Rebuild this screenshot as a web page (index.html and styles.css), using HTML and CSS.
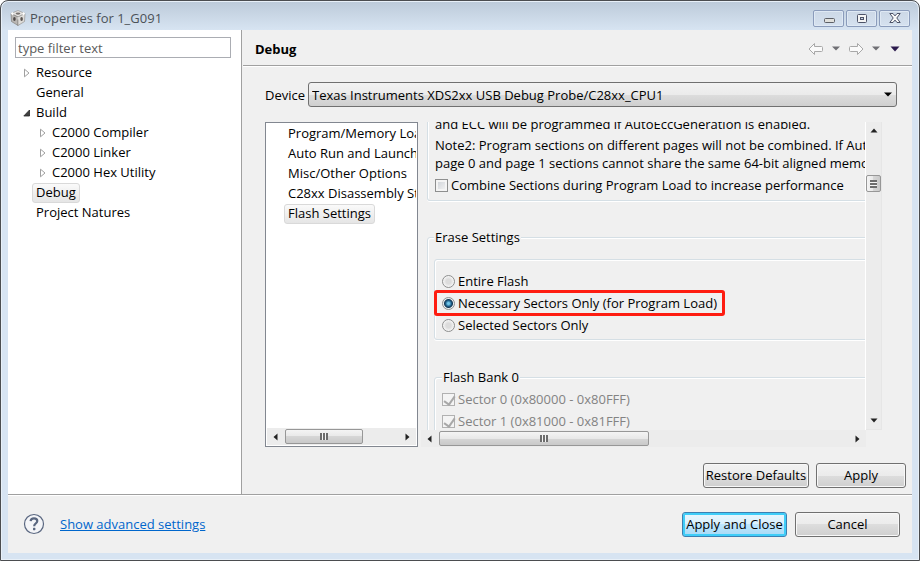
FILE: index.html
```html
<!DOCTYPE html>
<html lang="en">
<head>
    <meta charset="UTF-8">
    <meta name="viewport" content="width=device-width, initial-scale=1.0">
    <title>Properties for 1_G091</title>
    <link rel="stylesheet" href="styles.css">
</head>
<body>
    <div class="window">
        <header class="titlebar">
            <svg class="app-icon" width="16" height="16" viewBox="0 0 16 16">
                <path d="M8 0.5 15 3.5 8 7 1 3.5Z" fill="#e6e4e2" stroke="#8b8a88" stroke-width=".6"/>
                <path d="M1 3.5 8 7V15.5L1.5 11.5Z" fill="#b9b6b3" stroke="#77736f" stroke-width=".6"/>
                <path d="M15 3.5 8 7V15.5L14.5 11.5Z" fill="#dedcd9" stroke="#8b8a88" stroke-width=".6"/>
                <ellipse cx="8" cy="3.6" rx="2.4" ry="1.1" fill="#77716d"/>
                <ellipse cx="4.4" cy="9" rx="1.3" ry="2.1" fill="#4f4a48"/>
                <ellipse cx="11.6" cy="9" rx="1.3" ry="2.1" fill="#5b5552"/>
                <path d="M1 3.5 3 2.6V5ZM8 7V9.5M15 3.5 13 2.6V5Z" fill="#fff" stroke="#fff" stroke-width=".8"/>
            </svg>
            <h1 class="title">Properties for 1_G091</h1>
            <div class="window-buttons">
                <button class="window-button" type="button" aria-label="Minimize">
                    <svg width="12" height="12" viewBox="0 0 12 12"><rect x="1.5" y="6.5" width="10" height="4" rx="1" fill="#e0e0dc" stroke="#5c5f66"/></svg>
                </button>
                <button class="window-button" type="button" aria-label="Maximize">
                    <svg width="12" height="12" viewBox="0 0 12 12"><rect x="1.5" y="2.5" width="9" height="8" rx="1" fill="#f4f4f4" stroke="#4d5368"/><rect x="4.5" y="5.5" width="3" height="2" fill="#c7d3e2" stroke="#4d5368"/></svg>
                </button>
                <button class="window-button" type="button" aria-label="Close">
                    <svg width="12" height="12" viewBox="0 0 12 12"><path d="M.8 1.5H4L6 3.9 8 1.5h3.2L7.8 6l3.4 4.5H8L6 8.1 4 10.5H.8L4.2 6Z" fill="#f8f8f8" stroke="#4d5368"/></svg>
                </button>
            </div>
        </header>

        <div class="client">
            <div class="main">
                <aside class="sidebar">
                    <input class="filter" type="text" placeholder="type filter text" aria-label="type filter text">
                    <ul class="tree">
                        <li class="tree-item"><svg class="twisty" width="8" height="10"><path d="M1.5 1.2v7.6L6 5Z" fill="#fff" stroke="#a0a0a0"/></svg><span class="tree-label">Resource</span></li>
                        <li class="tree-item"><span class="twisty"></span><span class="tree-label">General</span></li>
                        <li class="tree-item"><svg class="twisty" width="8" height="10"><path d="M6.5 2v6H.8Z" fill="#404040" stroke="#262626" stroke-width=".8"/></svg><span class="tree-label">Build</span></li>
                        <li class="tree-item child"><svg class="twisty" width="8" height="10"><path d="M1.5 1.2v7.6L6 5Z" fill="#fff" stroke="#a0a0a0"/></svg><span class="tree-label">C2000 Compiler</span></li>
                        <li class="tree-item child"><svg class="twisty" width="8" height="10"><path d="M1.5 1.2v7.6L6 5Z" fill="#fff" stroke="#a0a0a0"/></svg><span class="tree-label">C2000 Linker</span></li>
                        <li class="tree-item child"><svg class="twisty" width="8" height="10"><path d="M1.5 1.2v7.6L6 5Z" fill="#fff" stroke="#a0a0a0"/></svg><span class="tree-label">C2000 Hex Utility</span></li>
                        <li class="tree-item"><span class="twisty"></span><span class="tree-label selected">Debug</span></li>
                        <li class="tree-item"><span class="twisty"></span><span class="tree-label">Project Natures</span></li>
                    </ul>
                </aside>

                <section class="page">
                    <div class="page-header">
                        <h2 class="page-title">Debug</h2>
                        <div class="history">
                            <button class="tool" type="button" aria-label="Back"><svg width="16" height="14" viewBox="0 0 16 14"><path d="M1 7 6.5 1.5V4.5H13.5q1 0 1 1V8.5q0 1-1 1H6.5V12.5Z" fill="#fafafa" stroke="#a8a8a8"/></svg></button>
                            <button class="tool" type="button" aria-label="Back history"><svg width="8" height="5"><path d="M0 .5h8L4 4.5Z" fill="#6f6f74"/></svg></button>
                            <button class="tool" type="button" aria-label="Forward"><svg width="16" height="14" viewBox="0 0 16 14"><path d="M15 7 9.5 1.5V4.5H2.5q-1 0-1 1V8.5q0 1 1 1H9.5V12.5Z" fill="#fafafa" stroke="#a8a8a8"/></svg></button>
                            <button class="tool" type="button" aria-label="Forward history"><svg width="8" height="5"><path d="M0 .5h8L4 4.5Z" fill="#6f6f74"/></svg></button>
                            <button class="tool tool-menu" type="button" aria-label="Menu"><svg width="10" height="6"><path d="M.5.5h9L5 5.5Z" fill="#2b1a4d"/></svg></button>
                        </div>
                    </div>

                    <div class="device-row">
                        <label class="device-label" for="device">Device</label>
                        <div class="combo">
                            <select id="device" class="combo-select">
                                <option>Texas Instruments XDS2xx USB Debug Probe/C28xx_CPU1</option>
                            </select>
                            <svg class="combo-arrow" width="8" height="5"><path d="M0 .5h8L4 4.5Z" fill="#000"/></svg>
                        </div>
                    </div>

                    <div class="panes">
                        <div class="category-pane">
                            <ul class="categories">
                                <li class="category"><span class="tree-label">Program/Memory Load Options</span></li>
                                <li class="category"><span class="tree-label">Auto Run and Launch Options</span></li>
                                <li class="category"><span class="tree-label">Misc/Other Options</span></li>
                                <li class="category"><span class="tree-label">C28xx Disassembly Style Options</span></li>
                                <li class="category"><span class="tree-label selected">Flash Settings</span></li>
                            </ul>
                            <div class="hscroll">
                                <svg class="scroll-arrow" width="5" height="8"><path d="M4.5.5v7L.5 4Z" fill="#222"/></svg>
                                <div class="track"><div class="thumb thumb-categories"></div></div>
                                <svg class="scroll-arrow" width="5" height="8"><path d="M.5.5v7L4.5 4Z" fill="#222"/></svg>
                            </div>
                        </div>

                        <div class="settings-pane">
                            <div class="settings">
                                <div class="group group-program">
                                    <p class="note">and ECC will be programmed if AutoEccGeneration is enabled.</p>
                                    <p class="note">Note2: Program sections on different pages will not be combined. If AutoEccGeneration is enabled,<br>page 0 and page 1 sections cannot share the same 64-bit aligned memory address.</p>
                                    <label class="option option-combine"><input class="check" type="checkbox">Combine Sections during Program Load to increase performance</label>
                                </div>

                                <fieldset class="group group-erase">
                                    <legend>Erase Settings</legend>
                                    <div class="group erase-modes">
                                        <label class="option"><input class="radio" type="radio" name="erase">Entire Flash</label>
                                        <label class="option highlighted"><input class="radio" type="radio" name="erase" checked>Necessary Sectors Only (for Program Load)</label>
                                        <label class="option"><input class="radio" type="radio" name="erase">Selected Sectors Only</label>
                                    </div>
                                    <fieldset class="group group-bank">
                                        <legend>Flash Bank 0</legend>
                                        <label class="option disabled"><input class="check" type="checkbox" checked disabled>Sector 0 (0x80000 - 0x80FFF)</label>
                                        <label class="option disabled"><input class="check" type="checkbox" checked disabled>Sector 1 (0x81000 - 0x81FFF)</label>
                                    </fieldset>
                                </fieldset>
                            </div>
                            <div class="vscroll">
                                <svg class="scroll-arrow" width="8" height="5"><path d="M.5 4.5h7L4 .5Z" fill="#222"/></svg>
                                <div class="track"><div class="thumb thumb-vertical"></div></div>
                                <svg class="scroll-arrow" width="8" height="5"><path d="M.5.5h7L4 4.5Z" fill="#222"/></svg>
                            </div>
                            <div class="hscroll">
                                <svg class="scroll-arrow" width="5" height="8"><path d="M4.5.5v7L.5 4Z" fill="#222"/></svg>
                                <div class="track"><div class="thumb thumb-settings"></div></div>
                                <svg class="scroll-arrow" width="5" height="8"><path d="M.5.5v7L4.5 4Z" fill="#222"/></svg>
                            </div>
                        </div>
                    </div>

                    <div class="page-actions">
                        <button class="button button-restore" type="button">Restore Defaults</button>
                        <button class="button button-apply" type="button">Apply</button>
                    </div>
                </section>
            </div>

            <footer class="footer">
                <button class="tool" type="button" aria-label="Help">
                    <svg width="22" height="22" viewBox="0 0 22 22"><circle cx="11" cy="11" r="9.5" fill="#f4f5f8" stroke="#5a6780" stroke-width="1.2"/><path d="M7.6 8.2Q7.8 5.4 11 5.4T14.3 8.1Q14.3 9.5 12.6 10.6 11.2 11.5 11.2 13.2" fill="none" stroke="#5a6780" stroke-width="2.2"/><rect x="10" y="14.8" width="2.4" height="2.4" rx=".6" fill="#5a6780"/></svg>
                </button>
                <a class="advanced" href="#">Show advanced settings</a>
                <div class="footer-actions">
                    <button class="button button-default" type="button">Apply and Close</button>
                    <button class="button button-cancel" type="button">Cancel</button>
                </div>
            </footer>
        </div>
    </div>
</body>
</html>
```
FILE: styles.css
```css
* {
    box-sizing: border-box;
}
body {
    margin: 0;
    background: #fff;
    color: #000;
    font-family: "Open Sans", "Noto Sans", sans-serif;
    font-size: 13px;
    line-height: 20px;
}
h1, h2, p, ul {
    margin: 0;
    padding: 0;
    font-size: 13px;
}
ul {
    list-style: none;
}
input, select, button {
    margin: 0;
    font: inherit;
    color: inherit;
}
svg {
    display: block;
    flex: none;
}

/* window frame */
.window {
    display: flex;
    flex-direction: column;
    height: 100vh;
    padding: 0 7px 7px;
    border: 1px solid #4b4d50;
    border-radius: 8px 8px 0 0;
    background: linear-gradient(#bccad9, #d7e4f2 29px);
    box-shadow: inset 0 0 0 1px #e8f0f8;
}
.titlebar {
    display: flex;
    align-items: center;
    height: 29px;
    padding: 5px 2px 0;
}
.title {
    flex: 1;
    padding-left: 4px;
    font-weight: normal;
    color: #4c5258;
}
.window-buttons {
    display: flex;
    gap: 2px;
}
.window-button {
    display: flex;
    align-items: center;
    justify-content: center;
    width: 31px;
    height: 17px;
    padding: 0;
    border: 1px solid #8b9cbb;
    border-radius: 2px;
    background: linear-gradient(#ccd8e6, #d5e1ef);
    box-shadow: inset 0 0 0 1px #dfe9f4;
}
.client {
    flex: 1;
    display: flex;
    flex-direction: column;
    min-height: 0;
    background: #f0f0f0;
}
.main {
    flex: 1;
    display: flex;
    min-height: 0;
}

/* left tree */
.sidebar {
    width: 234px;
    padding: 7px 10px 0 7px;
    border-right: 1px solid #a0a0a0;
    background: #fff;
}
.filter {
    display: block;
    width: 100%;
    height: 21px;
    padding: 0 2px;
    border: 1px solid #abadb3;
    outline: none;
}
.filter::placeholder {
    color: #5a5a5a;
    opacity: 1;
}
.tree {
    padding: 5px 0 0 8px;
}
.tree-item {
    display: flex;
    align-items: center;
    height: 20px;
}
.tree-item.child {
    padding-left: 16px;
}
.twisty {
    flex: none;
    width: 8px;
    margin-right: 1px;
}
.tree-label {
    height: 20px;
    padding: 0 3px;
    border: 1px solid transparent;
    border-radius: 3px;
    line-height: 17px;
    white-space: nowrap;
}
.tree-label.selected {
    border-color: #d9d9d9;
    background: linear-gradient(#fafafa, #e5e5e5);
}

/* debug page */
.page {
    flex: 1;
    display: flex;
    flex-direction: column;
    min-width: 0;
    margin-left: 1px;
}
.page-header {
    display: flex;
    align-items: center;
    justify-content: space-between;
    height: 36px;
    padding: 2px 12px 0;
    border-bottom: 1px solid #a0a0a0;
    box-shadow: 0 1px #fff;
}
.history {
    display: flex;
    align-items: center;
    gap: 8px;
}
.tool {
    padding: 0;
    border: 0;
    background: none;
}
.tool-menu {
    margin-left: 2px;
}
.device-row {
    display: flex;
    align-items: center;
    padding: 16px 15px 15px 22px;
}
.device-label {
    width: 43px;
}
.combo {
    position: relative;
    flex: 1;
}
.combo-select {
    display: block;
    width: 100%;
    height: 25px;
    padding: 0 20px 0 3px;
    border: 1px solid #707070;
    border-radius: 3px;
    background: linear-gradient(#f2f2f2, #ebebeb 50%, #dddddd 50%, #cfcfcf);
    appearance: none;
}
.combo-arrow {
    position: absolute;
    top: 10px;
    right: 5px;
    pointer-events: none;
}
.panes {
    flex: 1;
    display: flex;
    gap: 3px;
    min-height: 0;
    padding: 0 30px 0 22px;
}
.category-pane {
    display: flex;
    flex-direction: column;
    justify-content: space-between;
    width: 153px;
    padding: 1px;
    border: 1px solid #828790;
    background: #fff;
}
.categories {
    padding-left: 17px;
    overflow: hidden;
}
.category {
    display: flex;
    height: 20px;
}
.settings-pane {
    flex: 1;
    display: grid;
    grid-template: minmax(0, 1fr) 17px / minmax(0, 1fr) 16px;
    min-width: 0;
}
.settings {
    padding-left: 6px;
    border-right: 1px solid #fff;
    overflow: hidden;
    white-space: nowrap;
}

/* scroll bars */
.hscroll, .vscroll {
    display: flex;
    align-items: center;
    background: #ececec;
}
.hscroll {
    height: 17px;
    padding: 0 6px;
}
.vscroll {
    flex-direction: column;
    padding: 6px 0;
    border: 1px solid #e6e6e6;
    border-width: 0 1px 1px 0;
}
.track {
    flex: 1;
    display: flex;
}
.hscroll .track {
    padding: 0 7px;
}
.vscroll .track {
    padding: 42px 0;
}
.thumb {
    position: relative;
    height: 15px;
    border: 1px solid #979797;
    border-radius: 2px;
    background: linear-gradient(#f4f4f4, #e8e8e8 50%, #d6d6d6 50%, #c9c9c9);
}
.thumb::after {
    content: "";
    position: absolute;
    top: 3px;
    left: calc(50% - 4px);
    width: 8px;
    height: 7px;
    background: repeating-linear-gradient(90deg, #6d6d6d 0 2px, #f5f5f5 2px 3px);
}
.thumb-categories {
    width: 78px;
}
.thumb-settings {
    width: 210px;
}
.thumb-vertical {
    width: 15px;
    height: 17px;
    background: linear-gradient(90deg, #f4f4f4, #e8e8e8 50%, #d6d6d6 50%, #c9c9c9);
}
.thumb-vertical::after {
    top: 4px;
    left: 3px;
    width: 7px;
    height: 8px;
    background: repeating-linear-gradient(#6d6d6d 0 2px, #f5f5f5 2px 3px);
}

/* option groups */
.group {
    width: 150%;
    min-width: 0;
    margin: 0;
    border: 1px solid #d5dfe5;
    border-radius: 3px;
    box-shadow: inset 1px 1px #fff, 0 1px #fff;
}
.group legend {
    padding: 0 1px;
    background: #f0f0f0;
}
.group-program {
    margin-top: -7px;
    padding: 0 7px 5px;
    border-top: 0;
    border-radius: 0 0 3px 3px;
}
.note {
    margin-bottom: 3px;
    line-height: 18px;
}
.group-erase {
    margin-top: 26px;
    padding: 12px 6px;
}
.erase-modes {
    padding: 10px 7px 3px;
}
.group-bank {
    margin-top: 27px;
    padding: 1px 7px;
}
.option {
    position: relative;
    display: flex;
    align-items: center;
    gap: 3px;
    width: max-content;
    height: 22px;
}
.option-combine {
    height: 20px;
}
.option.disabled {
    color: #838383;
}
.option.highlighted::after {
    content: "";
    position: absolute;
    top: -2px;
    right: -8px;
    bottom: -2px;
    left: -8px;
    border: 3px solid #fe1c10;
    border-radius: 3px;
}
.check, .radio {
    appearance: none;
    display: block;
    flex: none;
    width: 13px;
    height: 13px;
    border: 1px solid #8e8f8f;
}
.check {
    background: linear-gradient(135deg, #cbcfd5, #f6f6f6);
    box-shadow: inset 0 0 0 2px #f4f4f4;
}
.check:disabled {
    border-color: #b1b1b1;
    background: #f4f4f4;
}
.check:disabled:checked::after {
    content: "";
    display: block;
    width: 5px;
    height: 9px;
    margin: 0 0 0 3px;
    border: solid #a8a8a8;
    border-width: 0 2px 2px 0;
    transform: rotate(35deg);
}
.radio {
    border-radius: 50%;
    background: radial-gradient(circle, #dcdcdc 30%, #f6f6f6 70%);
}
.radio:checked {
    background: radial-gradient(circle at 50% 50%, #6fc4e8 0 1px, #1b5b86 3px, #173a55 4px, #e8eef2 5px);
}

/* buttons */
.page-actions {
    display: flex;
    justify-content: flex-end;
    gap: 7px;
    padding: 16px 6px 6px;
}
.button {
    height: 25px;
    padding: 0;
    border: 1px solid #707070;
    border-radius: 3px;
    background: linear-gradient(#f2f2f2, #ebebeb 50%, #dddddd 50%, #cfcfcf);
    box-shadow: inset 0 0 0 1px #f8f8f8;
    line-height: 23px;
    white-space: nowrap;
}
.button-restore {
    width: 106px;
}
.button-apply {
    width: 90px;
}
.button-default, .button-cancel {
    width: 105px;
}
.button-default {
    border-color: #3c7fb1;
    background: linear-gradient(#eaf6fd, #d9f0fc 50%, #bee6fd 50%, #a7d9f5);
    box-shadow: inset 0 0 0 2px #3fcdf8;
}

/* bottom bar */
.footer {
    display: flex;
    align-items: center;
    height: 59px;
    padding: 0 12px 0 15px;
    border-top: 1px solid #a0a0a0;
    box-shadow: inset 0 1px #fff;
}
.advanced {
    flex: 1;
    padding-left: 15px;
    color: #0066cc;
}
.footer-actions {
    display: flex;
    gap: 8px;
}
```
